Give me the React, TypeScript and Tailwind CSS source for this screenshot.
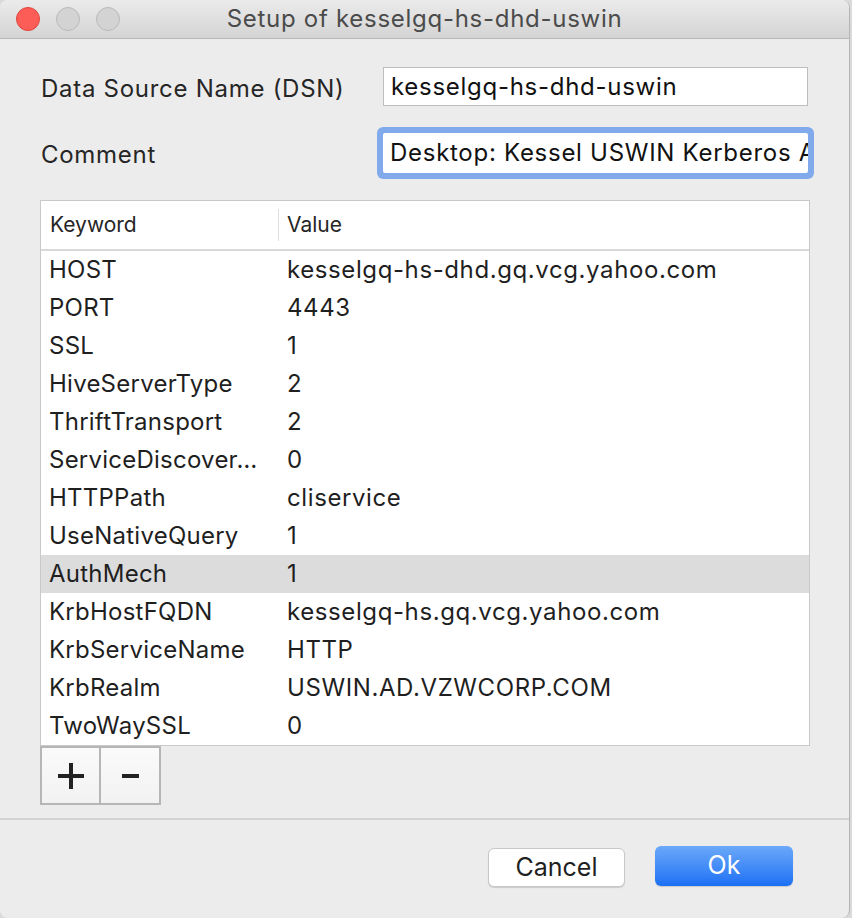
import React from "react";

const rows: [string, string][] = [
  ["HOST", "kesselgq-hs-dhd.gq.vcg.yahoo.com"],
  ["PORT", "4443"],
  ["SSL", "1"],
  ["HiveServerType", "2"],
  ["ThriftTransport", "2"],
  ["ServiceDiscover\u2026", "0"],
  ["HTTPPath", "cliservice"],
  ["UseNativeQuery", "1"],
  ["AuthMech", "1"],
  ["KrbHostFQDN", "kesselgq-hs.gq.vcg.yahoo.com"],
  ["KrbServiceName", "HTTP"],
  ["KrbRealm", "USWIN.AD.VZWCORP.COM"],
  ["TwoWaySSL", "0"],
];

export default function App() {
  return (
    <div
      className="w-[852px] h-[918px] bg-[#dadada] flex"
      style={{ fontFamily: "Inter, 'Noto Sans', sans-serif" }}
    >
      <div className="w-[850px] h-full bg-[#ececec] rounded-[8px] overflow-hidden border-r border-[#b4b4b4] flex flex-col">
        {/* title bar */}
        <div className="h-[39px] shrink-0 bg-gradient-to-b from-[#ebebeb] to-[#d4d4d4] border-b border-[#b9b9b9] grid grid-cols-[1fr_auto_1fr] items-center">
          <div className="flex items-center gap-[16px] pl-[16px]">
            <div className="w-[24px] h-[24px] rounded-full bg-[#fc5d56] border border-[#e1433c]" />
            <div className="w-[24px] h-[24px] rounded-full bg-[#d3d3d3] border border-[#b9b9b9]" />
            <div className="w-[24px] h-[24px] rounded-full bg-[#d3d3d3] border border-[#b9b9b9]" />
          </div>
          <div className="text-[24px] text-[#4b4b4b] tracking-[0.03em] -mt-[1px]">
            Setup of kesselgq-hs-dhd-uswin
          </div>
          <div />
        </div>

        {/* body */}
        <div className="flex-1 flex flex-col">
          <div className="pl-[41px] pr-[41px] pt-[28px] flex flex-col">
            <div className="flex items-center h-[39px]">
              <div className="w-[342px] text-[24px] text-[#262626] tracking-[0.03em] mt-[4px]">
                Data Source Name (DSN)
              </div>
              <div className="w-[425px] h-[39px] bg-white border border-[#bdbdbd] flex items-center pl-[7px] text-[24px] text-[#111] tracking-[0.03em] overflow-hidden whitespace-nowrap">
                kesselgq-hs-dhd-uswin
              </div>
            </div>
            <div className="flex items-center h-[40px] mt-[27px]">
              <div className="w-[342px] text-[24px] text-[#262626] tracking-[0.03em] mt-[4px]">
                Comment
              </div>
              <div className="w-[425px] h-[40px] bg-white rounded-[2px] shadow-[0_0_0_6px_#80aaec] flex items-center pl-[7px] text-[24px] text-[#111] tracking-[0.03em] overflow-hidden whitespace-nowrap">
                Desktop: Kessel USWIN Kerberos A
              </div>
            </div>
          </div>

          {/* table */}
          <div className="ml-[40px] mt-[27px] w-[770px] border border-[#c9c9c9] bg-white flex flex-col">
            <div className="h-[50px] flex items-center border-b-2 border-[#d9d9d9] text-[21px] text-[#262626]">
              <div className="w-[238px] pl-[9px] border-r border-[#dedede] h-[32px] flex items-center">
                Keyword
              </div>
              <div className="pl-[8px]">Value</div>
            </div>
            {rows.map(([k, v]) => (
              <div
                key={k}
                className={`h-[38px] flex items-center text-[24px] text-[#1f1f1f] tracking-[0.025em] ${
                  k === "AuthMech" ? "bg-[#dcdcdc]" : "bg-white"
                }`}
              >
                <div className="w-[238px] pl-[8px] whitespace-nowrap overflow-hidden tracking-[0.01em]">{k}</div>
                <div className="pl-[8px] whitespace-nowrap">{v}</div>
              </div>
            ))}
          </div>

          {/* +/- */}
          <div className="ml-[40px] flex">
            <div className="w-[61px] h-[59px] bg-gradient-to-b from-[#fafafa] to-[#f2f2f2] border-2 border-[#b6b6b6] flex items-center justify-center">
              <svg width="26" height="26" viewBox="0 0 26 26">
                <rect x="11" y="0" width="4" height="26" fill="#222" />
                <rect x="0" y="11" width="26" height="4" fill="#222" />
              </svg>
            </div>
            <div className="w-[60px] h-[59px] bg-gradient-to-b from-[#fafafa] to-[#f2f2f2] border-2 border-l-0 border-[#b6b6b6] flex items-center justify-center">
              <svg width="17" height="4" viewBox="0 0 17 4">
                <rect x="0" y="0" width="17" height="4" fill="#222" />
              </svg>
            </div>
          </div>

          <div className="mt-[13px] h-[2px] bg-[#d3d3d3]" />

          <div className="flex justify-end gap-[30px] pr-[56px] pt-[26px]">
            <button className="w-[137px] h-[39px] mt-[2px] bg-white rounded-[6px] border border-[#c8c8c8] shadow-[0_1px_1px_rgba(0,0,0,0.15)] text-[25px] text-[#1f1f1f] flex items-center justify-center">
              Cancel
            </button>
            <button className="w-[138px] h-[40px] rounded-[6px] bg-gradient-to-b from-[#6aa8f8] to-[#1b6ff5] text-[25px] text-white flex items-center justify-center shadow-[0_1px_1px_rgba(0,0,0,0.15)]">
              Ok
            </button>
          </div>
        </div>
      </div>
    </div>
  );
}
